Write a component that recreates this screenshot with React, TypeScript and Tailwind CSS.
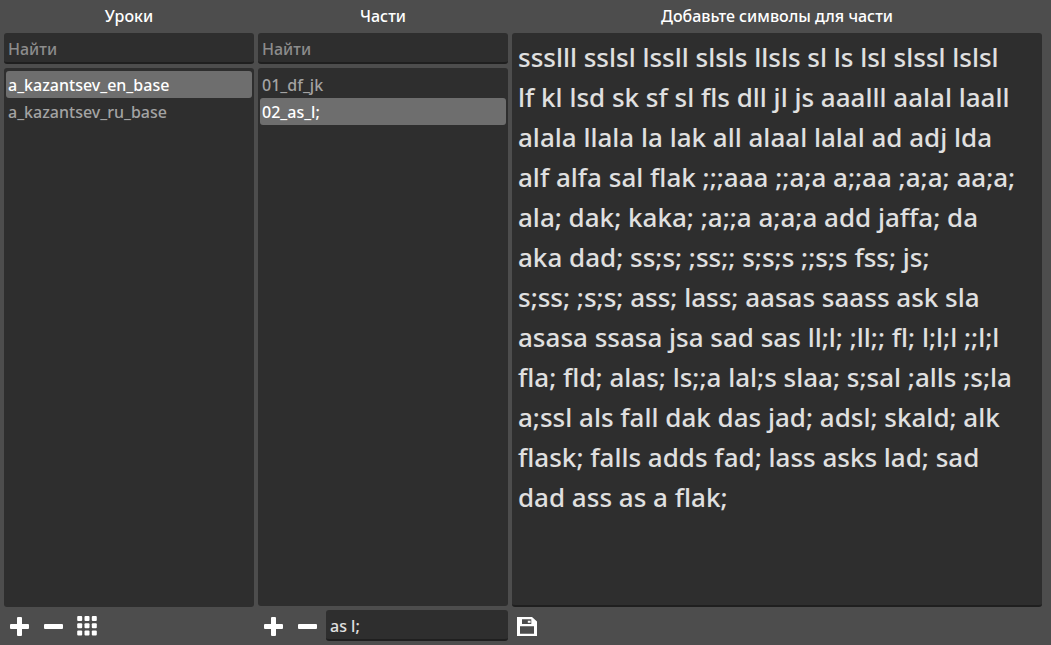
import { useState } from "react";
import type { ReactNode } from "react";

const PART_TEXT =
  "ssslll sslsl lssll slsls llsls sl ls lsl slssl lslsl lf kl lsd sk sf sl fls dll jl js aaalll aalal laall alala llala la lak all alaal lalal ad adj lda alf alfa sal flak ;;;aaa ;;a;a a;;aa ;a;a; aa;a; ala; dak; kaka; ;a;;a a;a;a add jaffa; da aka dad; ss;s; ;ss;; s;s;s ;;s;s fss; js;\n" +
  "s;ss; ;s;s; ass; lass; aasas saass ask sla asasa ssasa jsa sad sas ll;l; ;ll;; fl; l;l;l ;;l;l fla; fld; alas; ls;;a lal;s slaa; s;sal ;alls ;s;la a;ssl als fall dak das jad; adsl; skald; alk flask; falls adds fad; lass asks lad; sad dad ass as a flak;";

const fieldClass =
  "h-[31px] w-full min-w-0 rounded-[3px] border-b-2 border-[#1f1f1f] bg-[#2e2e2e] px-1 pt-0.5 text-[16px] font-medium text-[#e0e0e0] outline-none placeholder:text-[#8c8c8c]";

function PlusIcon() {
  return (
    <svg width="20" height="20" viewBox="0 0 20 20" fill="#fff" aria-hidden="true">
      <rect x="8" y="1" width="5" height="19" rx="1" />
      <rect x="1" y="8" width="19" height="5" rx="1" />
    </svg>
  );
}

function MinusIcon() {
  return (
    <svg width="20" height="20" viewBox="0 0 20 20" fill="#fff" aria-hidden="true">
      <rect x="1" y="8" width="19" height="5" rx="1" />
    </svg>
  );
}

function GridIcon() {
  const steps = [0, 7.3, 14.6];
  return (
    <svg width="20" height="20" viewBox="0 0 20 20" fill="#fff" aria-hidden="true">
      {steps.map((y) =>
        steps.map((x) => <rect key={`${x}-${y}`} x={x + 0.2} y={y} width="5" height="5" rx="1" />),
      )}
    </svg>
  );
}

function SaveIcon() {
  return (
    <svg width="20" height="20" viewBox="0 0 20 20" fill="#fff" aria-hidden="true">
      <path
        fillRule="evenodd"
        d="M0 1H15L20 5.5V20H0ZM3 10.3V17.7H17V10.3ZM5 3.2V8H14.3V3.2ZM10.8 4.8H13.6V6.8H10.8Z"
      />
    </svg>
  );
}

function IconButton({ label, children }: { label: string; children: ReactNode }) {
  return (
    <button type="button" aria-label={label} className="flex h-8 w-[30px] shrink-0 items-center justify-center">
      {children}
    </button>
  );
}

function ListPanel({ title, items, initial }: { title: string; items: string[]; initial: string }) {
  const [selected, setSelected] = useState(initial);
  const [query, setQuery] = useState("");
  return (
    <>
      <h2 className="h-[33px] shrink-0 text-center text-[16px] leading-8 font-medium text-white">{title}</h2>
      <input
        type="text"
        aria-label={`Найти: ${title}`}
        placeholder="Найти"
        value={query}
        onChange={(e) => setQuery(e.target.value)}
        className={`${fieldClass} shrink-0`}
      />
      <ul className="mt-1 flex min-h-0 grow flex-col overflow-auto rounded-[3px] bg-[#2e2e2e] px-0.5 pt-[3px]">
        {items
          .filter((item) => item.includes(query))
          .map((item) => (
            <li key={item}>
              <button
                type="button"
                aria-pressed={item === selected}
                onClick={() => setSelected(item)}
                className={`block h-[27px] w-full rounded-[3px] px-0.5 pt-px text-left text-[16px] leading-[26px] font-medium ${
                  item === selected ? "bg-[#6e6e6e] text-white" : "text-[#a3a3a3]"
                }`}
              >
                {item}
              </button>
            </li>
          ))}
      </ul>
    </>
  );
}

export default function App() {
  const [name, setName] = useState("as l;");
  const [text, setText] = useState(PART_TEXT);
  return (
    <main className="flex h-screen gap-1 bg-[#4d4d4d] pr-[9px] pb-[3px] pl-1 font-['Noto_Sans',sans-serif]">
      <section className="flex w-[250px] shrink-0 flex-col">
        <ListPanel title="Уроки" items={["a_kazantsev_en_base", "a_kazantsev_ru_base"]} initial="a_kazantsev_en_base" />
        <div className="mt-[3px] flex shrink-0 gap-1">
          <IconButton label="Добавить урок">
            <PlusIcon />
          </IconButton>
          <IconButton label="Удалить урок">
            <MinusIcon />
          </IconButton>
          <IconButton label="Сетка">
            <GridIcon />
          </IconButton>
        </div>
      </section>

      <section className="flex w-[250px] shrink-0 flex-col">
        <ListPanel title="Части" items={["01_df_jk", "02_as_l;"]} initial="02_as_l;" />
        <div className="mt-1 flex shrink-0 gap-1">
          <IconButton label="Добавить часть">
            <PlusIcon />
          </IconButton>
          <IconButton label="Удалить часть">
            <MinusIcon />
          </IconButton>
          <input
            type="text"
            aria-label="Символы части"
            value={name}
            onChange={(e) => setName(e.target.value)}
            className={fieldClass}
          />
        </div>
      </section>

      <section className="flex min-w-0 grow flex-col">
        <label
          htmlFor="part-text"
          className="h-[33px] shrink-0 text-center text-[16px] leading-8 font-medium text-white"
        >
          Добавьте символы для части
        </label>
        <textarea
          id="part-text"
          spellCheck={false}
          value={text}
          onChange={(e) => setText(e.target.value)}
          className="min-h-0 grow resize-none rounded-[3px] border-b-2 border-[#1f1f1f] bg-[#2e2e2e] pt-1 pr-6 pl-1.5 text-[26px] leading-10 font-medium text-[#e0e0e0] outline-none"
        />
        <div className="mt-[3px] flex shrink-0">
          <IconButton label="Сохранить">
            <SaveIcon />
          </IconButton>
        </div>
      </section>
    </main>
  );
}
